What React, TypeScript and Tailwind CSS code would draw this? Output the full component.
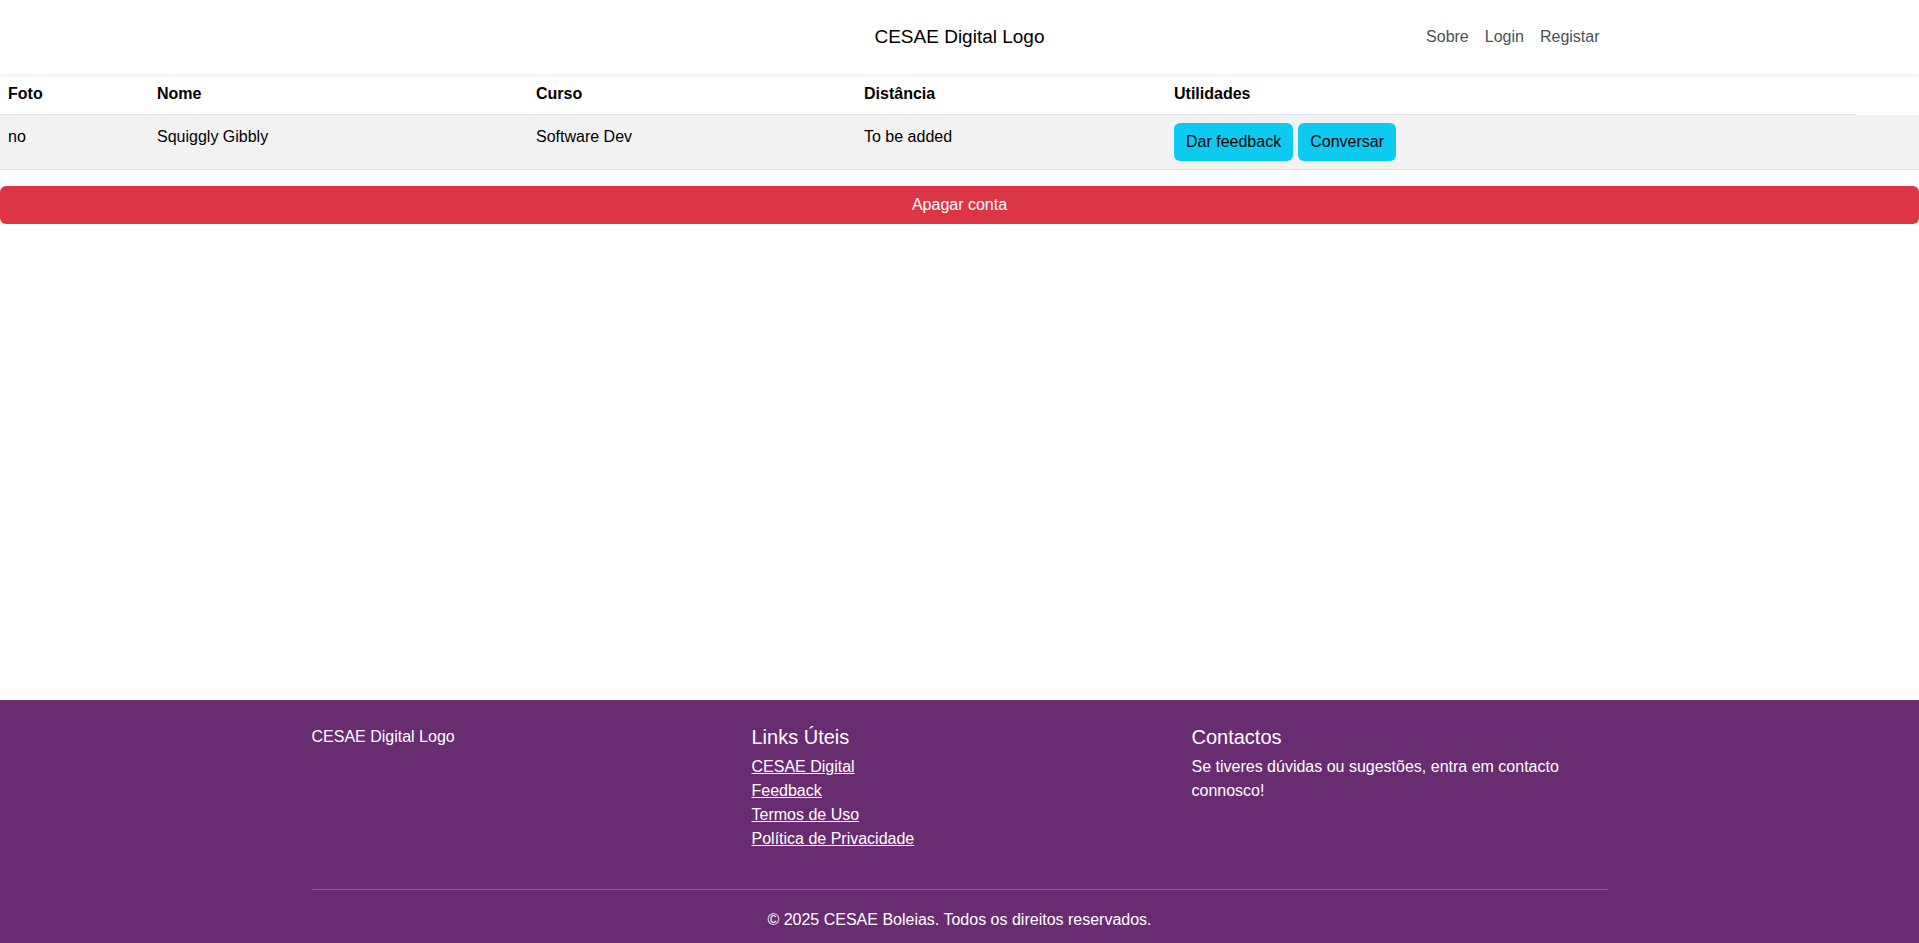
import React from 'react';

const font = { fontFamily: '"Liberation Sans", Arial, sans-serif' };

const links = ['CESAE Digital', 'Feedback', 'Termos de Uso', 'Política de Privacidade'];

export default function App() {
  return (
    <div className="min-h-screen flex flex-col bg-white text-[#212529] text-base leading-6" style={font}>
      {/* Navbar */}
      <header className="bg-white h-[74px] shadow-[0_2px_4px_rgba(0,0,0,0.075)] relative z-10">
        <div className="mx-auto w-[1320px] px-3 h-full grid grid-cols-3 items-center">
          <div />
          <div className="text-center text-[19px] text-black">CESAE Digital Logo</div>
          <nav className="flex justify-end text-[#4a5058]">
            <a className="px-2">Sobre</a>
            <a className="px-2">Login</a>
            <a className="px-2">Registar</a>
          </nav>
        </div>
      </header>

      {/* Main */}
      <main className="flex-1">
        <div className="grid grid-cols-[149px_379px_328px_310px_690px_1fr] font-bold text-black">
          <div className="px-2 py-2 border-b border-[#dee2e6]">Foto</div>
          <div className="px-2 py-2 border-b border-[#dee2e6]">Nome</div>
          <div className="px-2 py-2 border-b border-[#dee2e6]">Curso</div>
          <div className="px-2 py-2 border-b border-[#dee2e6]">Distância</div>
          <div className="px-2 py-2 border-b border-[#dee2e6]">Utilidades</div>
          <div />
        </div>
        <div className="grid grid-cols-[149px_379px_328px_310px_690px_1fr] bg-[#f2f2f2] border-b border-[#dee2e6] text-black">
          <div className="px-2 pt-[10px]">no</div>
          <div className="px-2 pt-[10px]">Squiggly Gibbly</div>
          <div className="px-2 pt-[10px]">Software Dev</div>
          <div className="px-2 pt-[10px]">To be added</div>
          <div className="px-2 py-2 flex gap-[5px]">
            <button className="bg-[#0dcaf0] text-black rounded-md px-3 h-[38px] leading-6">Dar feedback</button>
            <button className="bg-[#0dcaf0] text-black rounded-md px-3 h-[38px] leading-6">Conversar</button>
          </div>
          <div className="py-2" />
        </div>
        <button className="mt-4 w-full h-[38px] bg-[#dc3545] text-white rounded-md">Apagar conta</button>
      </main>

      {/* Footer */}
      <footer className="bg-[#692c70] text-white pt-[25px] pb-[11px]">
        <div className="w-[1296px] mx-auto">
          <div className="grid grid-cols-[440px_440px_1fr]">
            <div>
              <p>CESAE Digital Logo</p>
            </div>
            <div>
              <h5 className="text-[20px] leading-6 mb-[6px]">Links Úteis</h5>
              <ul>
                {links.map((l) => (
                  <li key={l}>
                    <a className="underline">{l}</a>
                  </li>
                ))}
              </ul>
            </div>
            <div>
              <h5 className="text-[20px] leading-6 mb-[6px]">Contactos</h5>
              <p className="w-[416px]">Se tiveres dúvidas ou sugestões, entra em contacto connosco!</p>
            </div>
          </div>
          <hr className="mt-[38px] border-0 border-t border-white/25" />
          <p className="mt-[18px] text-center">© 2025 CESAE Boleias. Todos os direitos reservados.</p>
        </div>
      </footer>
    </div>
  );
}
